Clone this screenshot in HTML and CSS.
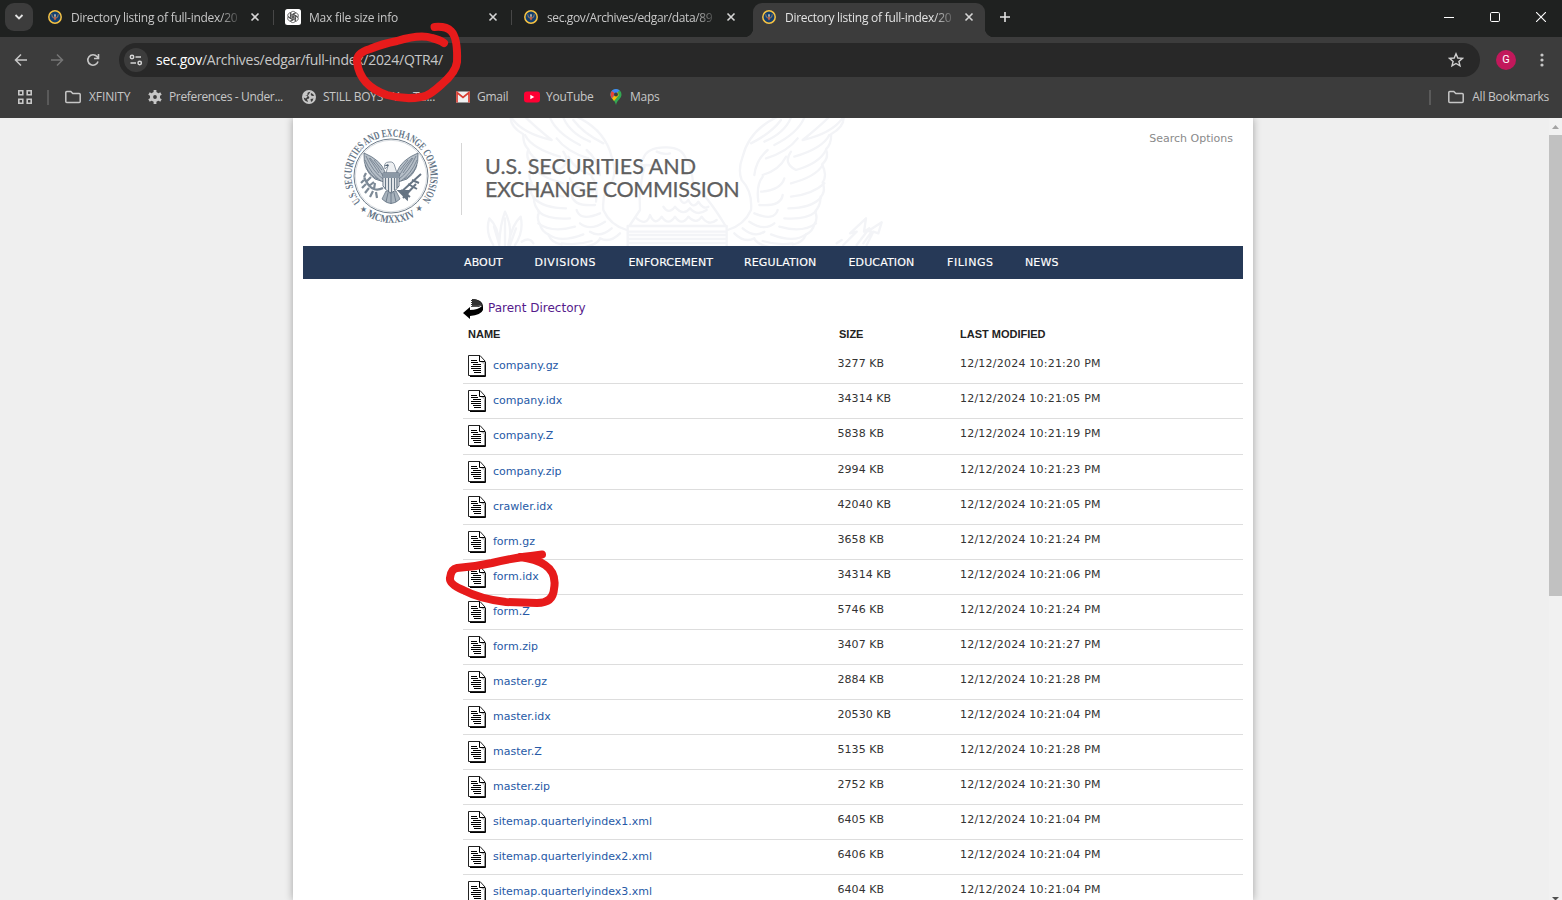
FILE: index.html
```html
<!DOCTYPE html>
<html lang="en">
<head>
<meta charset="utf-8">
<title>Directory listing of full-index/2024/QTR4/</title>
<link rel="stylesheet" href="styles.css">
</head>
<body>
<svg class="defs" width="0" height="0">
  <symbol id="sec" viewBox="0 0 14 14"><circle cx="7" cy="7" r="6.200" fill="#123f70" stroke="#f6c243" stroke-width="1.500"/><path d="M3.700 4.200c.1 2 .8 3.300 2 3.800M10.300 4.200c-.1 2-.8 3.300-2 3.800" fill="none" stroke="#8c7866" stroke-width="1.100"/><path d="M6.200 4.200h1.600v2.500H6.200z" fill="#c9c3b8"/><path d="M5.800 7h2.400v2L7 10.500 5.800 9z" fill="#b8604a"/></symbol>
  <symbol id="x" viewBox="0 0 10 10"><path d="M1.500 1.500l7 7m0-7l-7 7" stroke="currentColor" stroke-width="1.600"/></symbol>
  <symbol id="folder" viewBox="0 0 18 14"><path d="M1.800 2.500a1 1 0 0 1 1-1h4l2 2h6.400a1 1 0 0 1 1 1v7a1 1 0 0 1-1 1H2.800a1 1 0 0 1-1-1z" fill="none" stroke="currentColor" stroke-width="1.500"/></symbol>
  <symbol id="doc" viewBox="0 0 18 22"><path d="M2 21.500h15.500V7" fill="none" stroke="#000"/><path d="M.5.500h11.500l5 5.500v14.500H.5z" fill="#fff" stroke="#222"/><path d="M11.500 1v5.500H17" fill="none" stroke="#000"/><path d="M13 7h4v3z" fill="#bbb"/><path d="M3 5.500h6M3 7.500h7M5 9.500h8M3 11.500h10M3 13.500h10M5 15.500h8M6 17.500h7" stroke="#000" stroke-width="1.100"/></symbol>
</svg>

<header class="browser">
  <div class="tabs">
    <div class="tab-search"><svg width="12" height="8" viewBox="0 0 12 8"><path d="M2.500 2L6 5.500 9.500 2" fill="none" stroke="#e3e3e3" stroke-width="1.800"/></svg></div>
    <div class="tab"><svg class="fav"><use href="#sec"/></svg><span class="tab-text">Directory listing of full-index/20</span><svg class="close"><use href="#x"/></svg></div>
    <div class="tab split"><svg class="fav gpt" viewBox="0 0 16 16"><rect width="16" height="16" rx="2.500" fill="#fff"/><g fill="none" stroke="#333" stroke-width=".7"><path id="petal" d="M5.400 9.500V5.200c0-3.400 4.300-3.700 5.200-1.100L7.200 6v2.500"/><use href="#petal" transform="rotate(60 8 8)"/><use href="#petal" transform="rotate(120 8 8)"/><use href="#petal" transform="rotate(180 8 8)"/><use href="#petal" transform="rotate(240 8 8)"/><use href="#petal" transform="rotate(300 8 8)"/></g></svg><span class="tab-text normal">Max file size info</span><svg class="close"><use href="#x"/></svg></div>
    <div class="tab split"><svg class="fav"><use href="#sec"/></svg><span class="tab-text tight">sec.gov/Archives/edgar/data/89</span><svg class="close"><use href="#x"/></svg></div>
    <div class="tab active"><svg class="fav"><use href="#sec"/></svg><span class="tab-text">Directory listing of full-index/20</span><svg class="close"><use href="#x"/></svg></div>
    <svg class="plus" viewBox="0 0 12 12"><path d="M6 1v10M1 6h10" stroke="#e3e3e3" stroke-width="1.600"/></svg>
    <div class="window-buttons">
      <svg width="10" height="10"><path d="M0 5.500h10" stroke="#fff"/></svg>
      <svg width="10" height="10"><rect x=".5" y=".5" width="9" height="9" rx="1.200" fill="none" stroke="#fff"/></svg>
      <svg width="10" height="10"><path d="M0 0l10 10M10 0L0 10" stroke="#fff" stroke-width="1.100"/></svg>
    </div>
  </div>
  <div class="toolbar">
    <svg class="tool" viewBox="0 0 16 16"><path d="M14 8H3M8 2.500L2.500 8 8 13.500" fill="none" stroke="#c7c7c7" stroke-width="1.500"/></svg>
    <svg class="tool" viewBox="0 0 16 16"><path d="M2 8h11M8 2.500L13.500 8 8 13.500" fill="none" stroke="#757575" stroke-width="1.500"/></svg>
    <svg class="tool" viewBox="0 0 16 16"><path d="M13 9.500A5.200 5.200 0 1 1 12 4.600l1.200 1.400M13.500 2v4.500H9" fill="none" stroke="#c7c7c7" stroke-width="1.600"/></svg>
    <div class="omnibox">
      <span class="site"><svg width="14" height="14" viewBox="0 0 14 14"><g fill="none" stroke="#d5d5d5" stroke-width="1.500"><circle cx="3" cy="4" r="1.700"/><path d="M6.500 4H12M1.500 10H7"/><circle cx="10.700" cy="10" r="1.700"/></g></svg></span>
      <span class="url"><b>sec.gov</b>/Archives/edgar/full-index/2024/QTR4/</span>
      <svg class="star" viewBox="0 0 16 16"><path d="M8 1.800l1.800 4.200 4.600.4-3.500 3 1.100 4.500L8 11.500l-4 2.400 1.100-4.500-3.500-3 4.600-.4z" fill="none" stroke="#d0d0d0" stroke-width="1.400"/></svg>
    </div>
    <span class="avatar">G</span>
    <svg class="dots" width="4" height="16"><circle cx="2" cy="3" r="1.600"/><circle cx="2" cy="8" r="1.600"/><circle cx="2" cy="13" r="1.600"/></svg>
  </div>
  <div class="bookmarks">
    <svg class="apps" viewBox="0 0 14 14"><g fill="none" stroke="#c7c7c7" stroke-width="1.600"><path d="M.8.800h4v4h-4zM9.200.800h4v4h-4zM.8 9.200h4v4h-4zM9.200 9.200h4v4h-4z"/></g></svg>
    <i class="bar"></i>
    <div class="bm b1"><svg width="18" height="14"><use href="#folder"/></svg><span>XFINITY</span></div>
    <div class="bm b2"><svg width="14" height="14" viewBox="0 0 14 14"><circle cx="7" cy="7" r="3.500" fill="none" stroke="#c7c7c7" stroke-width="3.200"/><path d="M7 0v3M7 11v3M1 3.500l2.500 1.500M10.500 9l2.500 1.500M1 10.500L3.500 9M10.500 5L13 3.500" stroke="#c7c7c7" stroke-width="2.800"/></svg><span>Preferences - Under...</span></div>
    <div class="bm b3"><svg width="14" height="14" viewBox="0 0 14 14"><circle cx="7" cy="7" r="7" fill="#c7c7c7"/><path d="M8.500 1.800Q5 2 5.500 4T3 5.500L7 6.500Q8 9 5 9L6 12Q2 11 1.700 7.500L4 8.500" fill="#3c3c3c"/><path d="M9 3q-1 3 2 3l1.300-.5Q11 3.500 9 3zM8.500 9l3-.5Q11 11 9 12z" fill="#3c3c3c"/></svg><span>STILL BOYS - YouTu...</span></div>
    <div class="bm b4"><svg width="14" height="12" viewBox="0 0 14 12"><path fill="#f1f1f1" d="M0 .5h14v11H0z"/><path d="M1 11.500V1.500l6 5 6-5v10" fill="none" stroke="#d93d32" stroke-width="1.700"/></svg><span>Gmail</span></div>
    <div class="bm b5"><svg width="16" height="12" viewBox="0 0 16 12"><rect y=".5" width="16" height="11" rx="3" fill="#ff0033"/><path d="M6.300 3.700v4.600L10.300 6z" fill="#fff"/></svg><span>YouTube</span></div>
    <div class="bm b6"><svg width="12" height="16" viewBox="0 0 12 16"><path d="M6 0a5.500 5.500 0 0 1 5.500 5.500C11.500 9.500 7 11 6 16 5 11 .5 9.500.5 5.500A5.500 5.500 0 0 1 6 0z" fill="#34a853"/><path d="M.5 5.500A5.500 5.500 0 0 1 9.500 1.300L2 9.500C1 8 .5 7 .5 5.500z" fill="#4285f4"/><path d="M1.800 2L5 4.500 2 9.500C.2 7 0 4.500 1.800 2z" fill="#ea4335"/><path d="M2 9.300L8 3l.5 3.500L4 12z" fill="#fbbc04"/><circle cx="6" cy="5.500" r="2" fill="#3c3c3c"/></svg><span>Maps</span></div>
    <div class="all"><i class="bar"></i><svg width="18" height="14"><use href="#folder"/></svg><span>All Bookmarks</span></div>
  </div>
</header>

<div class="viewport">
  <main class="page">
    <div class="masthead">
      <svg class="watermark" viewBox="0 9 1260 384">
        <g fill="none" stroke="#f3f4f7" stroke-width="7" stroke-linejoin="round" stroke-linecap="round">
          <g id="wing">
            <path d="M290 5Q375 45 395 125Q410 165 398 195Q365 230 370 285Q390 330 440 345"/>
            <path d="M92 5Q90 35 130 58Q128 85 145 103Q135 130 157 148Q140 180 155 203Q145 230 162 247Q160 270 178 290Q168 310 180 328Q185 350 205 358Q215 385 245 388"/>
            <path d="M92 5Q125 55 215 75Q165 35 135 5M135 60Q155 100 240 125M145 105Q165 145 235 165Q275 145 250 110M155 150Q175 185 250 205M150 205Q185 238 250 245M160 248Q190 280 258 280M175 290Q205 315 270 310M175 325Q215 355 285 335M205 358Q240 385 310 358M245 385Q290 392 335 378M290 400Q345 395 360 372"/>
            <path d="M210 8Q230 55 300 90M250 8Q270 55 330 80M280 15Q310 55 370 85M230 70Q260 110 325 130M265 125Q285 165 335 180M270 190Q280 225 340 230M275 240Q280 275 345 270M290 285Q300 320 360 295M300 325Q330 350 375 320M330 350Q360 370 395 340M360 370Q390 385 420 355M320 105Q355 135 360 180M335 185Q355 210 348 260"/>
          </g>
          <use href="#wing" transform="matrix(-1 0 0 1 1183 0)"/>
          <path d="M490 130Q500 98 555 97Q605 95 617 130Q635 150 640 210Q680 240 735 330M490 130Q475 155 495 150Q530 150 545 165M530 110Q550 120 570 115M495 150Q475 220 480 285L450 330M470 310Q500 335 510 300Q525 335 545 305Q565 335 585 305Q605 335 625 305Q650 330 665 305Q685 335 710 315M600 250Q610 275 625 255Q640 285 655 260Q670 285 685 275M550 275Q565 300 585 275Q610 305 630 280Q650 305 680 285"/>
          <path d="M443 333H740V350H443zM443 345V400M740 345V400M447 360H735M447 372H735M447 384H735"/>
          <path d="M40 390Q15 350 28 310Q55 335 58 385Q60 330 75 290Q100 340 85 390Q95 330 122 305Q132 350 105 390M75 310V390M42 335L58 390M108 340L90 390M125 380Q150 365 160 385"/>
          <path d="M1090 390L1130 350 1110 355 1158 310 1152 350 1168 340 1130 390M1150 385L1175 350 1165 348 1205 322 1195 355 1180 350 1160 390M1070 385L1085 375"/>
        </g>
      </svg>
      <svg class="seal" viewBox="-50 -50 100 100">
        <defs><path id="arc1" d="M-30.300 25.400A39.500 39.500 0 1 1 31.100 24.300"/><path id="arc2" d="M-24.300 40A46.800 46.800 0 0 0 24.300 40"/></defs>
        <circle r="37" fill="none" stroke="#6d7b89" stroke-width="1"/><circle r="35.700" fill="none" stroke="#b4bcc4" stroke-width=".5"/>
        <text class="seal-text"><textPath href="#arc1" textLength="177" lengthAdjust="spacingAndGlyphs">U.S. SECURITIES AND EXCHANGE COMMISSION</textPath></text>
        <text class="seal-text"><textPath href="#arc2" textLength="51" lengthAdjust="spacingAndGlyphs">MCMXXXIV</textPath></text>
        <text class="seal-star" x="-31" y="36">★</text><text class="seal-star" x="24.500" y="35">★</text>
        <g id="sw"><path d="M-27-23Q-28-5-16 3L-7 6-6-4Q-10-16-27-23z" fill="#b5bec7" stroke="#6a7887" stroke-width=".9"/><path d="M-25-20Q-18-4-8 3M-26-16Q-20-2-10 5M-21-18Q-12-8-8 0M-26-11Q-20 1-13 3M-17-16L-9-6M-22-18L-12-3" fill="none" stroke="#617080" stroke-width=".7"/></g>
        <use href="#sw" transform="scale(-1 1)"/>
        <path d="M-6-7Q-8-14-2-14Q3-15 4-9L6-3H-5L-3-10z" fill="#eef0f2" stroke="#748290" stroke-width=".8"/><path d="M-7-10l4-2 1 2z" fill="#526375"/>
        <path d="M-8-3H8V10Q5 15 0 17Q-5 15-8 10z" fill="#fff" stroke="#627181"/><path d="M-8-3H8V2H-8z" fill="#8b98a5"/><path d="M-5.500 2V13M-2.500 2V15M.5 2V16M3.500 2V14M6 2V12" stroke="#6a7988" stroke-width="1.400"/>
        <path d="M-5 15L-9 23Q0 32 9 23L5 15Q0 19-5 15z" fill="#a9b4be" stroke="#6a7988" stroke-width=".8"/><path d="M0 17v11M-3 17l-2 9M3 17l2 9" stroke="#617080" stroke-width=".8"/>
        <path d="M-8 12Q-20 18-27 1M-27 4l-3 3M-25 8l-4 4M-22 12l-4 5M-18 15l-3 6M-15 16l1 6M-27 1l2-4M-25 6l5-5M-22 10l5-4M-17 13l1-6" fill="none" stroke="#7c8996" stroke-width="2.200"/>
        <path d="M9 17L30-2M12 22L25 8M10 14l9 7M17 8l9 5M21 4l7 3M8 15l9 0-1 8z" fill="#5f6f7e" stroke="#677584" stroke-width="2"/>
      </svg>
      <div class="agency"><span>U.S. SECURITIES AND</span><span class="l2">EXCHANGE COMMISSION</span></div>
      <span class="search">Search Options</span>
    </div>
    <nav class="nav"><span>ABOUT</span><span class="n2">DIVISIONS</span><span>ENFORCEMENT</span><span>REGULATION</span><span>EDUCATION</span><span class="n2">FILINGS</span><span>NEWS</span></nav>
    <section class="listing">
      <div class="parent"><svg width="20" height="20" viewBox="0 0 20 20"><path d="M8 0q12 0 12 8v3q-2 5-13 6v3L0 14l7-6v3q8 0 12-4L8 8z" fill="#000"/><path d="M8 0q8 0 11 5l-3 3H8z" fill="#333"/><path d="M8 7q7 1 11-1" stroke="#999" fill="none" stroke-width=".5"/><path d="M8.500 0v8" stroke="#fff" stroke-dasharray="1 1"/></svg><a>Parent Directory</a></div>
      <div class="head"><span>NAME</span><span>SIZE</span><span>LAST MODIFIED</span></div>
      <div id="rows"></div>
    </section>
  </main>
  <div class="scrollbar"><svg width="7" height="4"><path d="M0 4L3.500 0 7 4z" fill="#a3a3a3"/></svg><div class="thumb"></div><svg class="down" width="7" height="4"><path d="M0 1h7L3.500 4.500z" fill="#505050"/></svg></div>
</div>

<svg class="ink" viewBox="0 0 1562 900"><path d="M434.500 27Q446 26 451 31Q458 38 457 62Q456 72 442 84Q428 97 421 97Q405 100 387 95Q360 86 357 62Q356 53 370 49Q382 44 397 41Q420 34 432 38Q440 40 444 43"/><path d="M542 554.500Q512 558 492 563Q474 567 457 568Q451 569 450 578Q449 584 463 590Q480 599 506 602L537 603Q553 603 554 589Q557 573 545 565Q536 559 520 557"/></svg>
<script src="rows.js"></script>
</body>
</html>
```
FILE: rows.js
```js
const files = [
  ["company.gz", 3277, "20"], ["company.idx", 34314, "05"], ["company.Z", 5838, "19"],
  ["company.zip", 2994, "23"], ["crawler.idx", 42040, "05"], ["form.gz", 3658, "24"],
  ["form.idx", 34314, "06"], ["form.Z", 5746, "24"], ["form.zip", 3407, "27"],
  ["master.gz", 2884, "28"], ["master.idx", 20530, "04"], ["master.Z", 5135, "28"],
  ["master.zip", 2752, "30"], ["sitemap.quarterlyindex1.xml", 6405, "04"],
  ["sitemap.quarterlyindex2.xml", 6406, "04"], ["sitemap.quarterlyindex3.xml", 6404, "04"]
];
document.getElementById("rows").innerHTML = files.map(([name, size, sec]) =>
  `<div class="row"><svg width="18" height="22"><use href="#doc"/></svg><a>${name}</a><span>${size} KB</span><span class="date">12/12/2024 10:21:${sec} PM</span></div>`
).join("");
```
FILE: styles.css
```css
* { box-sizing: border-box; }
body { margin: 0; width: 1562px; height: 900px; overflow: hidden; position: relative; background: #efefef; font-family: "DejaVu Sans", sans-serif; }
.defs { position: absolute; }
svg { display: block; flex: none; }
.browser { height: 118px; background: #3c3c3c; color: #c7c7c7; font: 12px "Open Sans", sans-serif; white-space: nowrap; }
.tabs { height: 37px; background: #1f2120; display: flex; align-items: flex-start; }
.tab-search { width: 28px; height: 28px; margin: 3px 6px 0 5px; border-radius: 9px; background: #3c3c3c; display: grid; place-items: center; }
.tab { position: relative; width: 232px; height: 34px; margin: 3px 6px 0 0; padding: 0 11px 6px 9px; display: flex; align-items: center; }
.tab.split::before { content: ""; position: absolute; left: -4px; top: 7px; width: 1px; height: 15px; background: #474747; }
.fav { width: 14px; height: 14px; margin-right: 9px; }
.gpt { width: 16px; height: 16px; margin: 0 8px 0 -1px; }
.tab-text { width: 169px; letter-spacing: -.26px; -webkit-mask-image: linear-gradient(90deg, #000 148px, transparent 172px); }
.tab-text.normal { letter-spacing: -.2px; }
.tab-text.tight { letter-spacing: -.38px; }
.close { width: 10px; height: 10px; margin-left: auto; color: #d5d5d5; }
.active { background: #3c3c3c; border-radius: 9px 9px 0 0; color: #e3e3e3; }
.active::before, .active::after { content: ""; position: absolute; bottom: 0; width: 9px; height: 9px; }
.active::before { left: -9px; background: radial-gradient(circle at 0 0, transparent 9px, #3c3c3c 9.5px); }
.active::after { right: -9px; background: radial-gradient(circle at 100% 0, transparent 9px, #3c3c3c 9.5px); }
.plus { width: 12px; height: 12px; margin: 8px 0 0 8px; margin-top: 11px; }
.window-buttons { margin: 12px 16px 0 auto; display: flex; gap: 36px; }
.toolbar { height: 46px; display: flex; align-items: center; padding: 0 18px 0 13px; }
.tool { width: 16px; height: 16px; margin-right: 20px; }
.omnibox { width: 1361px; height: 34px; margin-left: -2px; border-radius: 17px; background: #282828; display: flex; align-items: center; padding: 0 16px 0 5px; }
.site { width: 24px; height: 24px; border-radius: 50%; background: #3c3c3c; display: grid; place-items: center; margin-right: 8px; }
.url { font-size: 14px; letter-spacing: -.28px; padding-bottom: 1px; }
.url b { font-weight: 400; color: #fff; }
.star { width: 16px; height: 16px; margin-left: auto; }
.avatar { width: 20px; height: 20px; margin-left: 16px; border-radius: 50%; background: #c2185b; color: #fff; font: 11px/20px Roboto, sans-serif; text-align: center; }
.dots { margin-left: auto; fill: #c7c7c7; }
.bookmarks { height: 35px; display: flex; align-items: center; padding: 0 13px 7px 18px; font-size: 12px; letter-spacing: -.25px; }
.bookmarks span { padding-bottom: 1px; }
.apps { width: 14px; height: 14px; margin-right: 15px; }
.bar { width: 2px; height: 15px; background: #5a5a5a; }
.bm, .all { display: flex; align-items: center; }
.b1 { margin-left: 15px; width: 84px; gap: 7px; letter-spacing: -.1px; }
.b2 { width: 154px; gap: 7px; letter-spacing: -.35px; }
.b3 { width: 154px; gap: 7px; }
.b4 { width: 68px; gap: 7px; }
.b5 { width: 86px; gap: 6px; }
.b6 { gap: 8px; }
.all { margin-left: auto; }
.all svg { margin: 0 7px 0 16px; }
.viewport { height: 782px; display: flex; justify-content: space-between; padding-left: 293px; }
.page { width: 960px; padding: 0 10px; background: #fff; box-shadow: 0 0 8px rgba(0,0,0,.32); clip-path: inset(0 -10px); }
.masthead { position: relative; height: 128px; display: flex; align-items: flex-start; }
.watermark { position: absolute; left: 177px; top: 0; width: 420px; height: 128px; }
.seal { position: relative; width: 100px; height: 100px; margin: 8px 20px 0 38px; }
.seal-text { font: bold 11px "Liberation Serif", serif; fill: #637385; }
.seal-star { font: 8px "DejaVu Sans", sans-serif; fill: #637385; }
.agency { position: relative; height: 72px; margin-top: 25px; border-left: 1px solid #d6d6d6; padding: 12px 0 0 23px; display: flex; flex-direction: column; font: 21.5px/23.5px Lato, sans-serif; color: #5f5f5f; white-space: nowrap; -webkit-text-stroke: .25px #5f5f5f; }
.agency .l2 { letter-spacing: -.37px; margin-top: -.5px; }
.search { margin: 14px 10px 0 auto; font-size: 11px; line-height: 14px; color: #8a8a8a; }
.nav { height: 33px; padding-left: 161px; background: #263957; color: #fff; display: grid; grid-template-columns: 70.500px 94px 115.500px 104.500px 98.500px 78px 60px; font-size: 11px; line-height: 33px; letter-spacing: .12px; -webkit-text-stroke: .15px #fff; }
.nav .n2 { letter-spacing: .55px; }
.listing { padding-left: 160px; font-size: 11px; color: #333; }
.parent { height: 42px; padding-top: 20px; display: flex; gap: 5px; font-size: 12px; line-height: 18px; color: #551a8b; }
.head { height: 27px; display: grid; grid-template-columns: 371px 121px 1fr; padding-left: 5px; font: bold 11px/26px "Liberation Sans", sans-serif; color: #222; }
.row { height: 35px; border-bottom: 1px solid #ddd; display: grid; grid-template-columns: 25px 344.500px 122.500px 1fr; padding-left: 5px; line-height: 14px; }
.row:nth-child(1), .row:nth-child(3) { height: 36px; }
.row:nth-child(1) { padding-top: 1px; }
.row svg { margin-top: 6px; }
.row a { padding-top: 10px; color: #2659a6; }
.row span { padding-top: 8px; letter-spacing: .05px; }
.row .date { letter-spacing: .22px; }
.scrollbar { width: 13px; background: #f1f1f1; display: flex; flex-direction: column; align-items: center; padding-top: 7px; }
.thumb { width: 13px; height: 461px; margin-top: 6px; background: #c1c1c1; }
.down { margin-top: auto; }
.ink { position: absolute; inset: 0; width: 1562px; height: 900px; pointer-events: none; fill: none; stroke: #e71b1b; stroke-width: 8; stroke-linecap: round; stroke-linejoin: round; }
```
